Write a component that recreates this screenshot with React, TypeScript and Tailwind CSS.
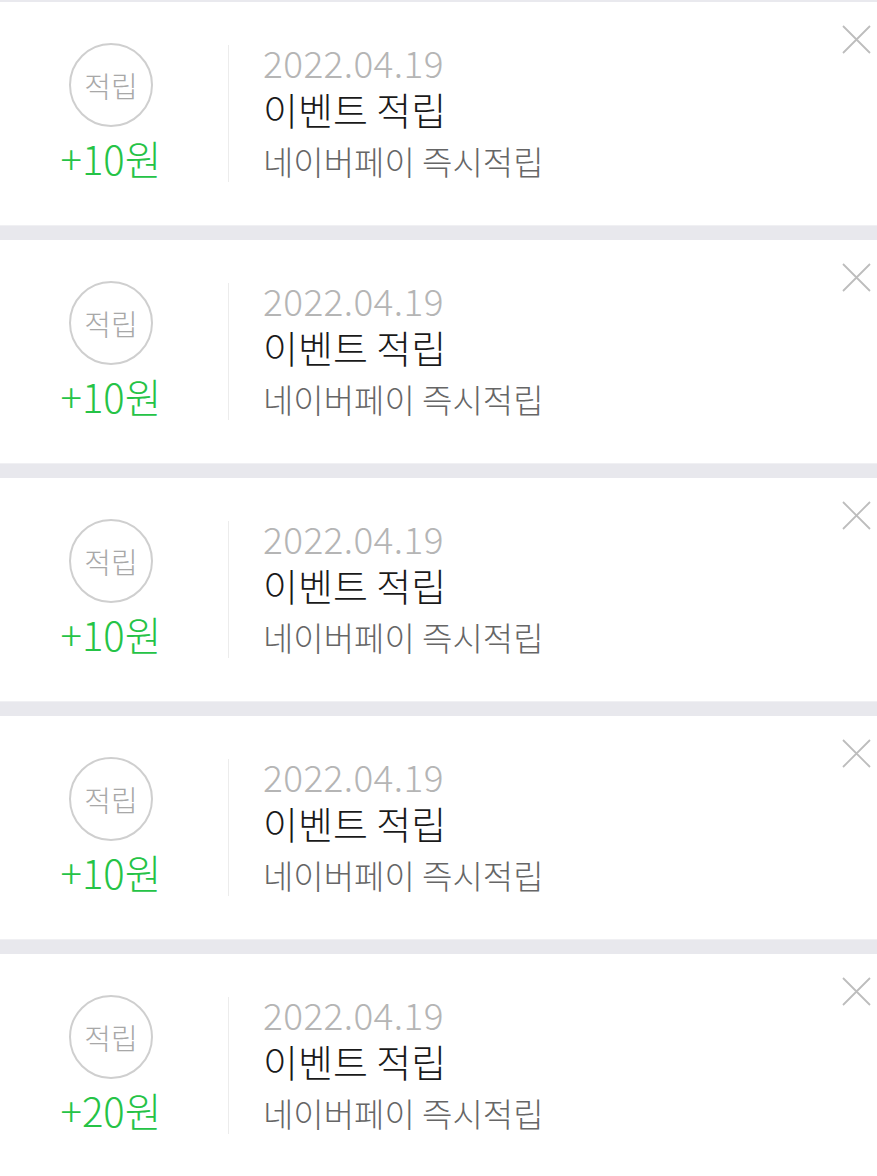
import React from 'react';

interface PointItem {
  date: string;
  title: string;
  desc: string;
  amount: number;
}

const items: PointItem[] = [
  { date: '2022.04.19', title: '이벤트 적립', desc: '네이버페이 즉시적립', amount: 10 },
  { date: '2022.04.19', title: '이벤트 적립', desc: '네이버페이 즉시적립', amount: 10 },
  { date: '2022.04.19', title: '이벤트 적립', desc: '네이버페이 즉시적립', amount: 10 },
  { date: '2022.04.19', title: '이벤트 적립', desc: '네이버페이 즉시적립', amount: 10 },
  { date: '2022.04.19', title: '이벤트 적립', desc: '네이버페이 즉시적립', amount: 20 },
];

const font = { fontFamily: '"Noto Sans CJK KR", "Noto Sans", sans-serif' };

const PointCard: React.FC<{ item: PointItem }> = ({ item }) => {
  return (
    <div className="relative flex h-[223px] items-center bg-white font-light">
      {/* left: badge + amount */}
      <div className="flex w-[222px] flex-col items-center">
        <div className="flex h-[84px] w-[84px] items-center justify-center rounded-full border-2 border-[#cfcfcf]">
          <span className="text-[29px] leading-none text-[#a8a8a8]">적립</span>
        </div>
        <div className="mb-[4px] mt-[9px] text-[40px] leading-[44px] text-[#25c346]">+{item.amount}원</div>
      </div>
      <div className="ml-[6px] h-[137px] w-px bg-[#ececec]" />
      <div className="flex flex-col pl-[34px]">
        <div className="text-[37px] leading-[46px] tracking-[0.4px] text-[#b5b5b5]">{item.date}</div>
        <div className="text-[38px] leading-[48px] text-[#1a1a1a]">{item.title}</div>
        <div className="text-[33px] leading-[56px] text-[#666666]">{item.desc}</div>
      </div>
      <button className="absolute right-[4px] top-[21px] p-[2px]" aria-label="삭제">
        <svg width="29" height="29" viewBox="0 0 29 29" fill="none">
          <path d="M1 1L28 28M28 1L1 28" stroke="#bdbdbd" strokeWidth="1.8" />
        </svg>
      </button>
    </div>
  );
};

export default function App() {
  return (
    <div className="min-h-screen w-[877px] bg-white" style={font}>
      <div className="h-[2px] bg-[#e9e9ee]" />
      {items.map((item, i) => (
        <div key={i}>
          <PointCard item={item} />
          {i < items.length - 1 && <div className="h-[15px] border-t border-[#f0f0f3] bg-[#e8e8ed]" />}
        </div>
      ))}
    </div>
  );
}
